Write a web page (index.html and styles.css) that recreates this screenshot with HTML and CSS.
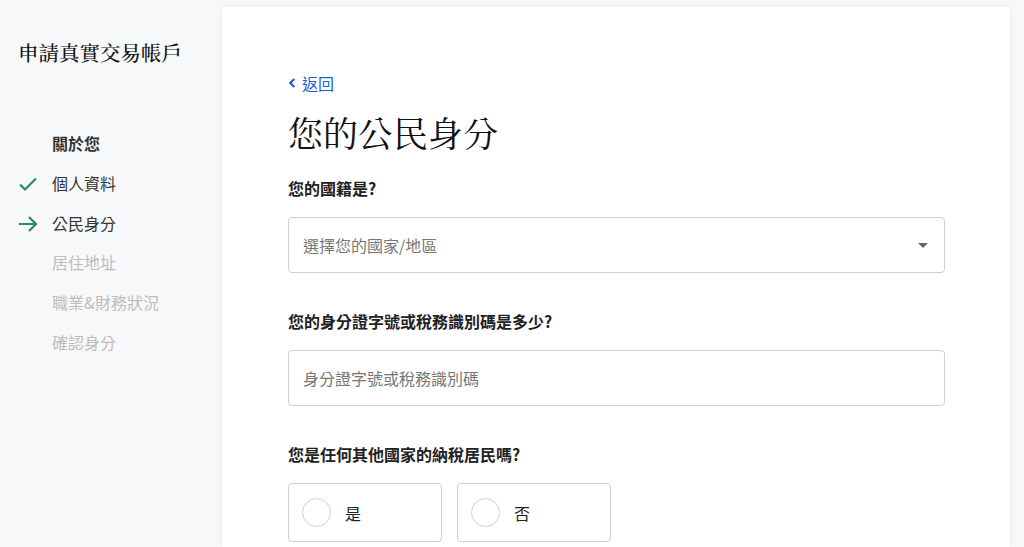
FILE: index.html
```html
<!DOCTYPE html>
<html lang="zh-Hant">
<head>
<meta charset="UTF-8">
<meta name="viewport" content="width=device-width, initial-scale=1.0">
<title>申請真實交易帳戶</title>
<link rel="stylesheet" href="styles.css">
</head>
<body>
<div class="page">
    <aside class="sidebar">
        <h1 class="app-title">申請真實交易帳戶</h1>
        <ul class="steps">
            <li class="step step-group">關於您</li>
            <li class="step step-done">
                <svg class="step-icon" viewBox="0 0 20 20" width="20" height="20"><path d="M2 10.5l5 5L18 4.5" fill="none" stroke="#2e8b57" stroke-width="2.2"/></svg>
                個人資料
            </li>
            <li class="step step-current">
                <svg class="step-icon" viewBox="0 0 20 20" width="20" height="20"><path d="M1 10h17M11 3l7 7-7 7" fill="none" stroke="#2e8b57" stroke-width="2.2"/></svg>
                公民身分
            </li>
            <li class="step step-todo">居住地址</li>
            <li class="step step-todo">職業&amp;財務狀況</li>
            <li class="step step-todo">確認身分</li>
        </ul>
    </aside>

    <main class="card">
        <a class="back-link" href="#">
            <svg viewBox="0 0 10 12" width="9" height="12"><path d="M7 1.5L2.5 6 7 10.5" fill="none" stroke="#1b5fd1" stroke-width="2.4"/></svg>
            返回
        </a>
        <h2 class="page-title">您的公民身分</h2>

        <div class="field">
            <label class="field-label">您的國籍是?</label>
            <div class="box select-box">
                <span class="placeholder">選擇您的國家/地區</span>
                <span class="caret"></span>
            </div>
        </div>

        <div class="field">
            <label class="field-label">您的身分證字號或稅務識別碼是多少?</label>
            <div class="box">
                <span class="placeholder">身分證字號或稅務識別碼</span>
            </div>
        </div>

        <div class="field">
            <label class="field-label">您是任何其他國家的納稅居民嗎?</label>
            <div class="radio-row">
                <div class="radio-box"><span class="radio"></span>是</div>
                <div class="radio-box"><span class="radio"></span>否</div>
            </div>
        </div>
    </main>
</div>
</body>
</html>
```

FILE: styles.css
```css
html, body {
    margin: 0;
    padding: 0;
    height: 100%;
    overflow: hidden;
}

body {
    background-color: #f7f8f9;
    font-family: "Noto Sans CJK TC", "Noto Sans", sans-serif;
    color: #222;
}

.page {
    display: flex;
    height: 100%;
}

.sidebar {
    width: 222px;
    flex-shrink: 0;
}

.app-title {
    margin: 38px 0 0 18px;
    font-family: "Noto Serif CJK TC", "Liberation Serif", "Noto Sans CJK TC", serif;
    font-size: 20.5px;
    font-weight: 500;
    line-height: 28px;
    color: #111;
}

.steps {
    list-style-type: none;
    margin: 58px 0 0 0;
    padding: 0;
}

.step {
    position: relative;
    height: 39.8px;
    line-height: 39.8px;
    padding-left: 52px;
    font-size: 16px;
    color: #333;
}

.step-group {
    font-weight: 700;
}

.step-todo {
    color: #bdbdbd;
}

.step-icon {
    position: absolute;
    left: 18px;
    top: 10px;
}

.card {
    flex: 1;
    margin: 7px 14px 0 0;
    padding: 63px 65px 0 66px;
    background-color: #fff;
    box-shadow: 0 0 8px rgba(0, 0, 0, 0.06);
}

.back-link {
    display: inline-flex;
    align-items: center;
    gap: 5px;
    color: #1b5fd1;
    text-decoration: none;
    font-size: 16px;
    line-height: 26px;
}

.page-title {
    margin: 11px 0 19px 0;
    font-family: "Noto Serif CJK TC", "Liberation Serif", "Noto Sans CJK TC", serif;
    font-size: 35px;
    font-weight: 400;
    line-height: 50px;
    color: #111;
}

.field {
    margin-bottom: 36px;
}

.field-label {
    display: block;
    font-size: 16px;
    font-weight: 700;
    line-height: 24px;
    color: #222;
    margin-bottom: 17px;
}

.box {
    height: 56px;
    box-sizing: border-box;
    border: 1px solid #cfcfcf;
    border-radius: 4px;
    display: flex;
    align-items: center;
    padding: 0 14px;
}

.placeholder {
    flex: 1;
    font-size: 16px;
    color: #777;
}

.caret {
    width: 0;
    height: 0;
    border-left: 5px solid transparent;
    border-right: 5px solid transparent;
    border-top: 5px solid #666;
    margin-right: 2px;
}

.radio-row {
    display: flex;
    gap: 15px;
}

.radio-box {
    width: 154px;
    height: 59px;
    box-sizing: border-box;
    border: 1px solid #cfcfcf;
    border-radius: 4px;
    display: flex;
    align-items: center;
    padding-left: 13px;
    font-size: 16px;
    color: #222;
}

.radio {
    width: 29px;
    height: 29px;
    box-sizing: border-box;
    border: 1px solid #cfcfcf;
    border-radius: 50%;
    margin-right: 14px;
}
```
